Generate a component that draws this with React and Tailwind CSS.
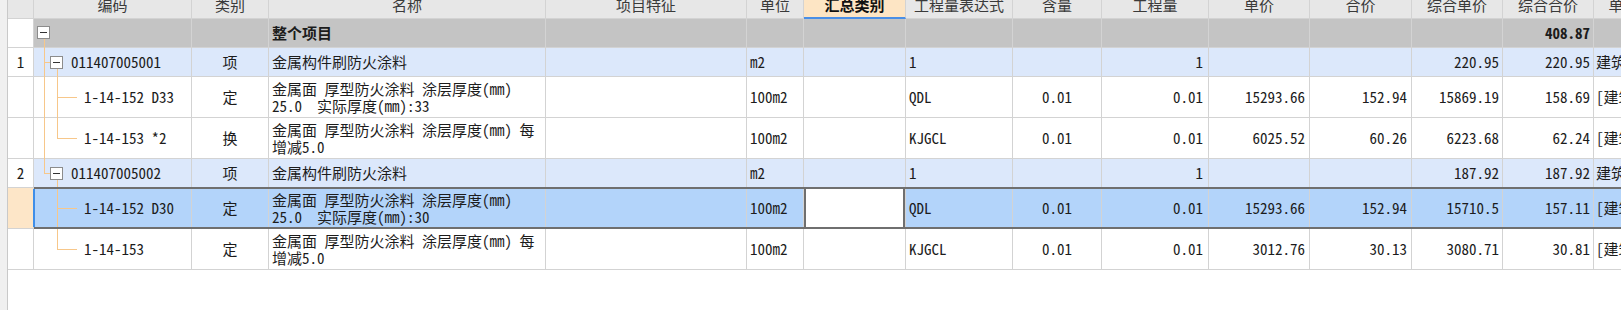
import React from 'react';

const cols = [
  { key: 'num', w: 'w-[26px]', align: 'justify-center' },
  { key: 'code', w: 'w-[158px]', align: 'justify-start' },
  { key: 'kind', w: 'w-[77px]', align: 'justify-center' },
  { key: 'name', w: 'w-[277px]', align: 'justify-start pl-[3px]' },
  { key: 'feat', w: 'w-[201px]', align: 'justify-start pl-[3px]' },
  { key: 'unit', w: 'w-[57px]', align: 'justify-start pl-[3px]' },
  { key: 'sum', w: 'w-[102px]', align: 'justify-start pl-[3px]' },
  { key: 'expr', w: 'w-[107px]', align: 'justify-start pl-[3px]' },
  { key: 'hl', w: 'w-[89px]', align: 'justify-center' },
  { key: 'qty', w: 'w-[107px]', align: 'justify-end pr-[5px]' },
  { key: 'dj', w: 'w-[101px]', align: 'justify-end pr-[4px]' },
  { key: 'hj', w: 'w-[102px]', align: 'justify-end pr-[4px]' },
  { key: 'zhdj', w: 'w-[91px]', align: 'justify-end pr-[3px]' },
  { key: 'zhhj', w: 'w-[91px]', align: 'justify-end pr-[3px]' },
  { key: 'last', w: 'w-[120px]', align: 'justify-start pl-[2px]' },
];

const headers = ['', '编码', '类别', '名称', '项目特征', '单位', '汇总类别', '工程量表达式', '含量', '工程量', '单价', '合价', '综合单价', '综合合价', '单价构成文件'];

const rows = [
  { type: 'root', h: 'h-[29px]', name: '整个项目', zhhj: '408.87' },
  { type: 'item', h: 'h-[29px]', num: '1', code: '011407005001', kind: '项', name: '金属构件刷防火涂料', unit: 'm2', expr: '1', qty: '1', zhdj: '220.95', zhhj: '220.95', last: '建筑工程' },
  { type: 'child', tree: 'mid1', h: 'h-[41px]', code: '1-14-152 D33', kind: '定', name: ['金属面 厚型防火涂料 涂层厚度(mm)', '25.0  实际厚度(mm):33'], unit: '100m2', expr: 'QDL', hl: '0.01', qty: '0.01', dj: '15293.66', hj: '152.94', zhdj: '15869.19', zhhj: '158.69', last: '[建筑工程]' },
  { type: 'child', tree: 'end1', h: 'h-[41px]', code: '1-14-153 *2', kind: '换', name: ['金属面 厚型防火涂料 涂层厚度(mm) 每', '增减5.0'], unit: '100m2', expr: 'KJGCL', hl: '0.01', qty: '0.01', dj: '6025.52', hj: '60.26', zhdj: '6223.68', zhhj: '62.24', last: '[建筑工程]' },
  { type: 'item', last2: true, h: 'h-[29px]', num: '2', code: '011407005002', kind: '项', name: '金属构件刷防火涂料', unit: 'm2', expr: '1', qty: '1', zhdj: '187.92', zhhj: '187.92', last: '建筑工程' },
  { type: 'child', tree: 'mid2', selected: true, h: 'h-[41px]', code: '1-14-152 D30', kind: '定', name: ['金属面 厚型防火涂料 涂层厚度(mm)', '25.0  实际厚度(mm):30'], unit: '100m2', expr: 'QDL', hl: '0.01', qty: '0.01', dj: '15293.66', hj: '152.94', zhdj: '15710.5', zhhj: '157.11', last: '[建筑工程]' },
  { type: 'child', tree: 'end2', h: 'h-[41px]', code: '1-14-153', kind: '定', name: ['金属面 厚型防火涂料 涂层厚度(mm) 每', '增减5.0'], unit: '100m2', expr: 'KJGCL', hl: '0.01', qty: '0.01', dj: '3012.76', hj: '30.13', zhdj: '3080.71', zhhj: '30.81', last: '[建筑工程]' },
];

const VLine = ({ x, from, to }) => (
  <div className="absolute w-px bg-[#f7c78a]" style={{ left: x, top: from, bottom: to }} />
);

const HLine = ({ x, w, y }) => (
  <div className="absolute h-px bg-[#f7c78a]" style={{ left: x, width: w, top: y }} />
);

const Box = ({ x, y }) => (
  <div
    className="absolute w-[13px] h-[13px] border border-[#8c8c8c] bg-white flex items-center justify-center"
    style={{ left: x, top: y }}
  >
    <div className="w-[7px] h-px bg-[#333]" />
  </div>
);

function Tree({ row }) {
  if (row.type === 'root') {
    return (
      <>
        <VLine x={10} from={20} to={-1} />
        <Box x={3} y={7} />
      </>
    );
  }
  if (row.type === 'item') {
    return (
      <>
        {row.last2 ? <VLine x={10} from={0} to={14} /> : <VLine x={10} from={0} to={-1} />}
        <HLine x={10} w={6} y={14} />
        <VLine x={23} from={21} to={-1} />
        <Box x={16} y={8} />
      </>
    );
  }
  const c = 20;
  return (
    <>
      {(row.tree === 'mid1' || row.tree === 'end1') && <VLine x={10} from={0} to={-1} />}
      {row.tree.startsWith('mid') ? <VLine x={23} from={0} to={-1} /> : <VLine x={23} from={0} to={20} />}
      <HLine x={23} w={20} y={c} />
    </>
  );
}

function Cell({ col, row, children, extra = '' }) {
  return (
    <div className={`${col.w} shrink-0 flex items-center ${col.align} border-r border-b border-[#d3d3d3] overflow-hidden whitespace-pre ${extra}`}>
      {children}
    </div>
  );
}

function Row({ row }) {
  let bg = 'bg-white';
  if (row.type === 'root') bg = 'bg-[#c4c4c4]';
  if (row.type === 'item') bg = 'bg-[#dce8fb]';
  if (row.selected) bg = 'bg-[#b3d4fa]';

  return (
    <div className={`relative flex ${row.h}`}>
      {cols.map((col) => {
        if (col.key === 'num') {
          return (
            <Cell key={col.key} col={col} row={row} extra={row.selected ? 'bg-[#fde6c8]' : 'bg-white'}>
              {row.num}
            </Cell>
          );
        }
        if (col.key === 'code') {
          return (
            <Cell key={col.key} col={col} row={row} extra={`${bg} relative overflow-visible`}>
              <Tree row={row} />
              <span className={row.type === 'item' ? 'pl-[37px]' : 'pl-[50px]'}>{row.code}</span>
            </Cell>
          );
        }
        if (col.key === 'name') {
          const v = row.name;
          return (
            <Cell key={col.key} col={col} row={row} extra={bg}>
              {Array.isArray(v) ? (
                <div className="leading-[17px]">
                  <div>{v[0]}</div>
                  <div>{v[1]}</div>
                </div>
              ) : (
                <span className={row.type === 'root' ? 'font-bold' : ''}>{v}</span>
              )}
            </Cell>
          );
        }
        if (col.key === 'sum' && row.selected) {
          return (
            <Cell key={col.key} col={col} row={row} extra="bg-white shadow-[inset_2px_0_0_#6f6f6f,inset_-2px_0_0_#6f6f6f]" />
          );
        }
        return (
          <Cell key={col.key} col={col} row={row} extra={bg}>
            <span className={row.type === 'root' ? 'font-bold' : ''}>{row[col.key]}</span>
          </Cell>
        );
      })}
      {row.selected && (
        <div className="absolute left-[26px] right-0 top-[-1px] bottom-0 border-y-2 border-[#6f6f6f] pointer-events-none">
          <div className="absolute left-[-1px] top-0 bottom-0 w-[2px] bg-[#3f8ee8]" />
        </div>
      )}
    </div>
  );
}

export default function App() {
  return (
    <div className="w-[1621px] h-[310px] bg-white flex overflow-hidden text-[15px] text-[#1c1c1c] font-['Noto_Sans_Mono_CJK_SC','Noto_Sans_CJK_SC',sans-serif]">
      <div className="w-[8px] shrink-0 h-full bg-[#f0f0f0] border-r border-[#c9c9c9]" />
      <div className="flex flex-col min-w-0">
        <div className="flex h-[19px] bg-[#e7e7e7]">
          {cols.map((col, i) => (
            <div
              key={col.key}
              className={`${col.w} shrink-0 h-[19px] overflow-hidden flex justify-center border-r border-b border-[#d3d3d3] whitespace-nowrap ${
                col.key === 'sum' ? 'bg-[#fde5c4] border-b-2 border-b-[#4a8fe6] font-bold text-[#111]' : 'text-[#3a3a3a]'
              }`}
            >
              <div className="mt-[-4px] leading-[17px] font-['Noto_Sans_CJK_SC',sans-serif]">{headers[i]}</div>
            </div>
          ))}
        </div>
        {rows.map((row, i) => (
          <Row key={i} row={row} />
        ))}
      </div>
    </div>
  );
}
